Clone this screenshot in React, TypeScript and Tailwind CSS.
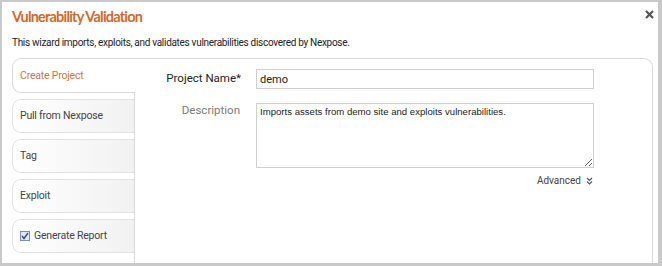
import { useState } from "react";

const tabs = ["Create Project", "Pull from Nexpose", "Tag", "Exploit", "Generate Report"];

const App = () => {
  const [name, setName] = useState("demo");
  const [description, setDescription] = useState(
    "Imports assets from demo site and exploits vulnerabilities."
  );

  return (
    <div className="w-[662px] h-[266px] overflow-hidden bg-white border-2 border-r-[4px] border-b-[3px] border-[#c9c9c9] font-['Roboto',sans-serif] relative">
      {/* Close */}
      <button className="absolute right-[4px] top-[8px] text-[#555]">
        <svg width="9" height="9" viewBox="0 0 9 9">
          <path d="M1 1 L8 8 M8 1 L1 8" stroke="currentColor" strokeWidth="2.2" />
        </svg>
      </button>

      {/* Header */}
      <div className="pl-[10px] pt-[6px]">
        <h1 className="text-[14.5px] leading-[18px] font-bold text-[#d0692c] font-['Lato',sans-serif] tracking-[-0.8px]">
          Vulnerability Validation
        </h1>
        <p className="mt-[11px] text-[10px] leading-[12px] text-[#222] tracking-[-0.3px]">
          This wizard imports, exploits, and validates vulnerabilities discovered by Nexpose.
        </p>
      </div>

      {/* Wizard */}
      <div className="flex ml-[10px] mt-[9px]">
        {/* Tabs */}
        <div className="w-[123px] flex flex-col gap-[6px] relative z-10">
          {tabs.map((t, i) =>
            i === 0 ? (
              <div
                key={t}
                className="w-[123px] h-[35px] flex items-center pl-[7px] bg-white border border-r-0 border-[#d9d9d9] rounded-l-[9px] text-[10.5px] text-[#c9793f] tracking-[-0.2px]"
              >
                {t}
              </div>
            ) : (
              <div
                key={t}
                className="w-[122px] h-[34px] flex items-center pl-[7px] bg-gradient-to-r from-white to-[#f1f1f1] border border-r-0 border-[#e2e2e2] rounded-l-[9px] text-[10.5px] text-[#444] tracking-[-0.2px]"
              >
                {t === "Generate Report" && (
                  <span className="w-[10px] h-[10px] mr-[4px] border border-[#7a8ea8] bg-[#dfe8f4] flex items-center justify-center">
                    <svg width="8" height="8" viewBox="0 0 8 8">
                      <path d="M1 4 L3 6.5 L7 1" stroke="#2d4f86" strokeWidth="1.4" fill="none" />
                    </svg>
                  </span>
                )}
                {t}
              </div>
            )
          )}
        </div>

        {/* Panel */}
        <div className="-ml-px w-[519px] h-[220px] border border-b-0 border-[#d9d9d9] rounded-tr-[9px] pt-[10px] pr-[58px]">
          <div className="flex items-center">
            <label className="w-[106px] text-right text-[11.5px] text-[#222]">Project Name*</label>
            <input
              type="text"
              value={name}
              onChange={(e) => setName(e.target.value)}
              className="ml-[15px] w-[338px] h-[20px] border border-[#cfcfcf] px-[3px] text-[11px] text-[#222] outline-none"
            />
          </div>

          <div className="flex mt-[14px]">
            <label className="w-[105px] text-right text-[11.5px] leading-[14px] text-[#7a7a7a]">Description</label>
            <textarea
              value={description}
              onChange={(e) => setDescription(e.target.value)}
              className="ml-[16px] w-[338px] h-[65px] border border-[#cfcfcf] px-[3px] py-[2px] text-[9.6px] leading-[12px] text-[#222] font-['Liberation_Sans',sans-serif] outline-none resize-y"
            />
          </div>

          <div className="flex justify-end items-center mt-[5px] pr-[1px] text-[10px] text-[#444]">
            Advanced
            <svg className="ml-[5px]" width="7" height="8" viewBox="0 0 7 8">
              <path d="M1 1 L3.5 3.5 L6 1 M1 4.5 L3.5 7 L6 4.5" stroke="#555" strokeWidth="1.2" fill="none" />
            </svg>
          </div>
        </div>
      </div>
    </div>
  );
};

export default App;
